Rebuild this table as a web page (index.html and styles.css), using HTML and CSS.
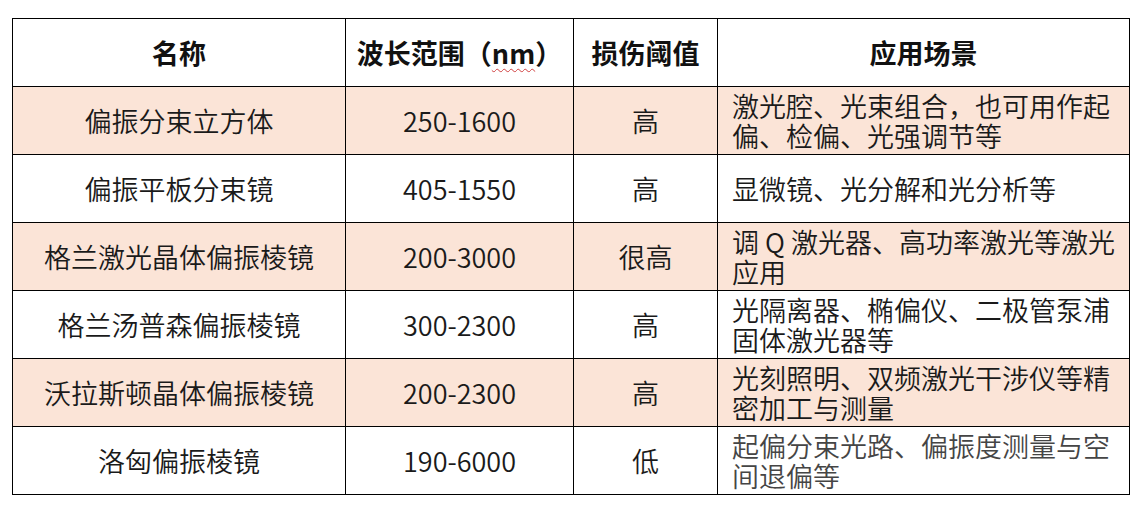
FILE: index.html
```html
<!DOCTYPE html>
<html lang="zh-CN">
<head>
<meta charset="utf-8">
<link rel="stylesheet" href="styles.css">
</head>
<body>
<div class="wrap">
<table class="tbl">
  <colgroup>
    <col class="c1"><col class="c2"><col class="c3"><col class="c4">
  </colgroup>
  <thead>
    <tr class="head">
      <th>名称</th>
      <th>波长范围（<span class="spell">nm</span>）</th>
      <th>损伤阈值</th>
      <th>应用场景</th>
    </tr>
  </thead>
  <tbody>
    <tr class="pink">
      <td>偏振分束立方体</td><td>250-1600</td><td>高</td>
      <td class="app">激光腔、光束组合，也可用作起偏、检偏、光强调节等</td>
    </tr>
    <tr>
      <td>偏振平板分束镜</td><td>405-1550</td><td>高</td>
      <td class="app">显微镜、光分解和光分析等</td>
    </tr>
    <tr class="pink">
      <td>格兰激光晶体偏振棱镜</td><td>200-3000</td><td>很高</td>
      <td class="app">调 Q 激光器、高功率激光等激光应用</td>
    </tr>
    <tr>
      <td>格兰汤普森偏振棱镜</td><td>300-2300</td><td>高</td>
      <td class="app">光隔离器、椭偏仪、二极管泵浦固体激光器等</td>
    </tr>
    <tr class="pink">
      <td>沃拉斯顿晶体偏振棱镜</td><td>200-2300</td><td>高</td>
      <td class="app">光刻照明、双频激光干涉仪等精密加工与测量</td>
    </tr>
    <tr>
      <td>洛匈偏振棱镜</td><td>190-6000</td><td>低</td>
      <td class="app grey">起偏分束光路、偏振度测量与空间退偏等</td>
    </tr>
  </tbody>
</table>
</div>
</body>
</html>
```

FILE: styles.css
```css
html, body {
  margin: 0;
  padding: 0;
  background: #ffffff;
}
.wrap {
  padding: 18px 0 0 12px;
}
.tbl {
  border-collapse: collapse;
  table-layout: fixed;
  width: 1117px;
  font-family: "Noto Sans CJK SC", "Noto Sans", sans-serif;
  font-size: 27px;
  line-height: 30px;
  color: #1a1a1a;
}
.c1 { width: 333px; }
.c2 { width: 228px; }
.c3 { width: 144px; }
.c4 { width: 412px; }
.tbl th, .tbl td {
  border: 1px solid #000;
  height: 67px;
  padding: 0;
  text-align: center;
  vertical-align: middle;
  font-weight: 350;
}
.tbl th {
  font-weight: 700;
  color: #111;
}
.pink td {
  background: #fbe4d7;
}
.tbl td.app {
  text-align: left;
  padding: 0 6px 0 14px;
}
.tbl td.grey {
  color: #454545;
}
.spell {
  text-decoration: underline wavy #d04040;
  text-decoration-thickness: 1px;
  text-underline-offset: 4px;
}
```
